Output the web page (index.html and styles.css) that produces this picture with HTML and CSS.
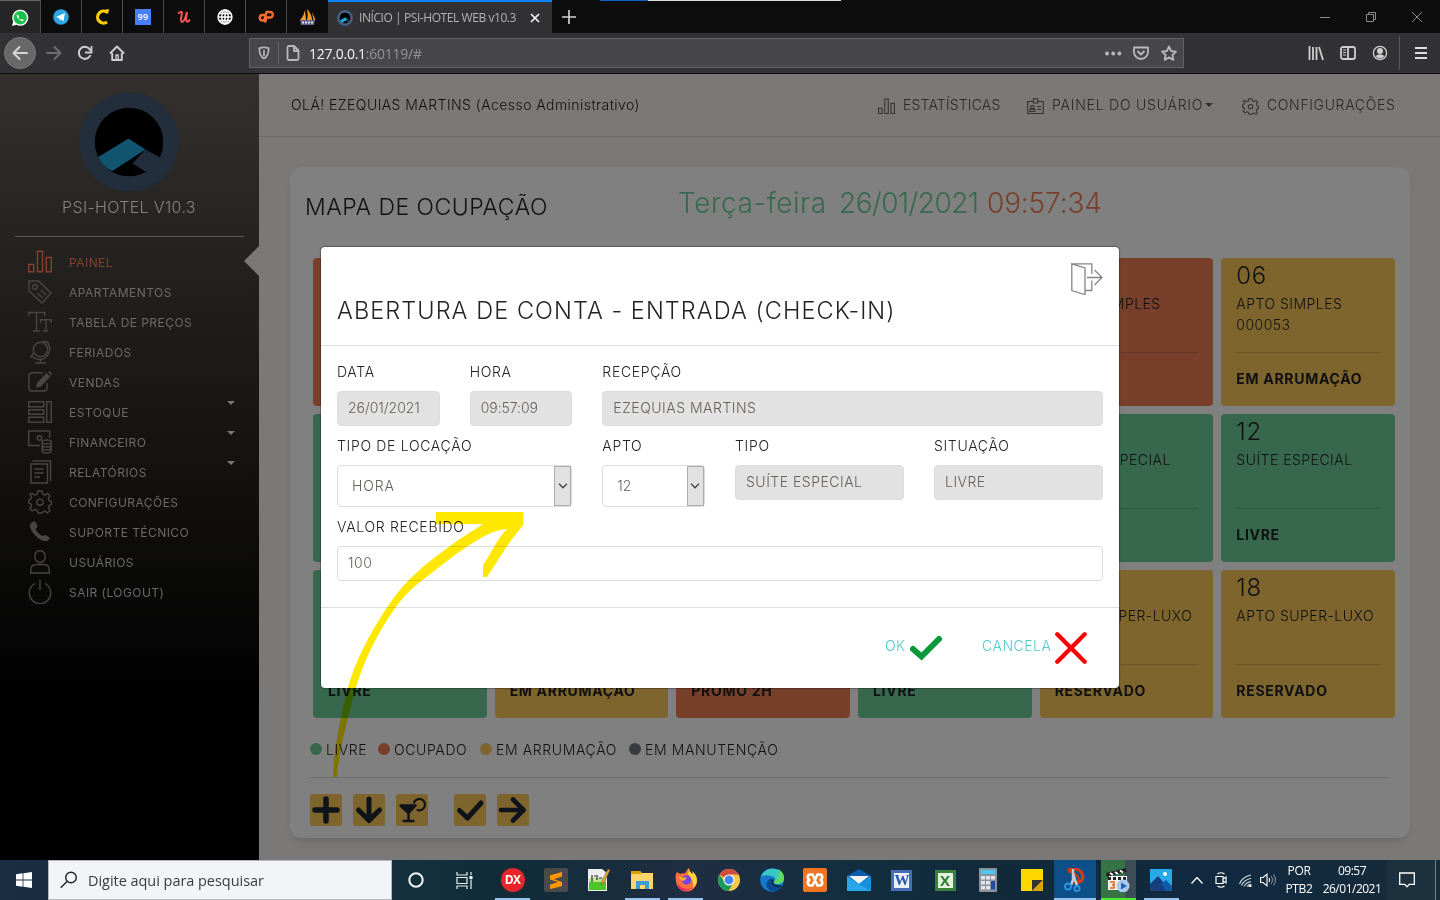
FILE: index.html
```html
<!DOCTYPE html>
<html lang="pt-BR">
<head>
<meta charset="utf-8">
<title>INÍCIO | PSI-HOTEL WEB v10.3</title>
<link rel="stylesheet" href="styles.css">
</head>
<body>
<div class="screen">
  <div class="tabs">
    <div class="pin pin-first"><svg width="18" height="18" viewBox="0 0 18 18"><path d="M1 17l1.200-4.500A8 8 0 1 1 5.500 15.800z" fill="#fff"/><circle cx="9.200" cy="8.800" r="6.700" fill="#18c04a"/><path d="M6.300 5.200c-1.400 1.500.2 4 2.200 5.600s3.700 1.900 4.300.3l-1.900-1.200-1 .9C8.700 10.300 7.800 9.300 7.400 8.300l.8-.9z" fill="#fff"/></svg></div>
    <div class="pin"><svg width="16" height="16" viewBox="0 0 16 16"><circle cx="8" cy="8" r="7.800" fill="#2ca5e0"/><path d="M3 8l9-4-1.600 8.500L7.600 10 7 12 6 9z" fill="#fff"/></svg></div>
    <div class="pin"><svg width="16" height="18" viewBox="0 0 16 18"><path d="M13.500 4.500A6 6 0 1 0 13 14" fill="none" stroke="#ffcd00" stroke-width="3.200"/><path d="M10 2l5-1-1 5z" fill="#ffcd00"/></svg></div>
    <div class="pin"><span class="fav99">99</span></div>
    <div class="pin"><svg width="14" height="14" viewBox="0 0 14 14"><path d="M1 3.500C3 2 5 1 5 3S3 10 4.500 11.500 8.500 9 10 2C9 8 8.500 11 10 11.500s2-1 3-2" fill="none" stroke="#ec5252" stroke-width="2.100"/></svg></div>
    <div class="pin"><svg width="16" height="16" viewBox="0 0 16 16" fill="none" stroke="#fff" stroke-width="1.500"><circle cx="8" cy="8" r="6.900"/><ellipse cx="8" cy="8" rx="3.200" ry="6.900"/><path d="M8 1v14M1 8h14M2 4.500h12M2 11.500h12"/></svg></div>
    <div class="pin"><svg width="16" height="14" viewBox="0 0 16 14" fill="none" stroke="#ff6c2c" stroke-width="2.300"><path d="M7 5H4.500a2.700 2.700 0 0 0 0 5.500H6L8.600 2H12a2.400 2.400 0 0 1 0 5.500H8.500L7.200 12.500"/></svg></div>
    <div class="pin pin-last"><svg width="16" height="16" viewBox="0 0 16 16"><path d="M0 11C3 8 4 5 5 1l1 10zM7 11c1-3 1-6 0-11 3 3 5 7 5 11zM12 3l3.500 8h-2z" fill="#f89c2a"/><path d="M0 11h15l-1 5H1z" fill="#5f6288"/><path d="M2 13.500h11" stroke="#ddd" stroke-width="2" stroke-dasharray="2 1"/></svg></div>
    <div class="tab">
      <svg width="16" height="16" viewBox="0 0 100 100"><use href="#logo"/><circle cx="50" cy="50" r="42" fill="none" stroke="#456184" stroke-width="15"/><path d="M49.500 46.500L66.500 57.500 33 79.300Q23 74 19.300 65z" fill="#23a5dc"/></svg>
      <span class="tab-title">INÍCIO | PSI-HOTEL WEB v10.3</span>
      <svg width="10" height="10" viewBox="0 0 10 10" stroke="#f3f3f3" stroke-width="1.700"><path d="M1 1l8 8M9 1L1 9"/></svg>
    </div>
    <svg class="plus" width="14" height="14" viewBox="0 0 14 14" stroke="#cfcfcf" stroke-width="1.700"><path d="M7 0v14M0 7h14"/></svg>
    <div class="top-strip"><i></i></div>
    <div class="win">
      <svg width="10" height="10" viewBox="0 0 10 10" stroke="#8d8d8d"><path d="M0 5.500h10"/></svg>
      <svg width="10" height="10" viewBox="0 0 10 10" fill="none" stroke="#8d8d8d"><path d="M.5 2.500h7v7h-7zM2.500 2.500v-2h7v7h-2"/></svg>
      <svg width="10" height="10" viewBox="0 0 10 10" stroke="#8d8d8d"><path d="M0 0l10 10M10 0L0 10"/></svg>
    </div>
  </div>
  <div class="toolbar">
    <div class="back"><svg width="16" height="16" viewBox="0 0 16 16" fill="none" stroke="#d6d6d6" stroke-width="2" stroke-linecap="round" stroke-linejoin="round"><path d="M15 8H2M7.500 2L1.500 8l6 6"/></svg></div>
    <svg class="fwd" width="16" height="16" viewBox="0 0 16 16" fill="none" stroke="#6d6d70" stroke-width="1.900" stroke-linecap="round" stroke-linejoin="round"><path d="M1 8h13M8.500 2l6 6-6 6"/></svg>
    <svg class="reload" width="16" height="16" viewBox="0 0 16 16" fill="none" stroke="#cfcfcf" stroke-width="2"><path d="M13.500 10A6 6 0 1 1 12.500 4L14 6"/><path d="M14.500 1v6.500H8" stroke-width="1.800"/></svg>
    <svg class="home" width="16" height="16" viewBox="0 0 16 16" fill="none" stroke="#cfcfcf" stroke-width="1.900" stroke-linejoin="round"><path d="M1 8.500L8 1.500l7 7M3.200 8v7h9.600V8"/><path d="M7 15v-5h2.200v5" stroke-width="1.400"/></svg>
    <div class="url">
      <svg width="12" height="14" viewBox="0 0 14 16" fill="none" stroke="#b9b9bb" stroke-width="1.900"><path d="M1.500 2.500Q7 .5 12.500 2.500C12.500 9 11 12.500 7 14.500 3 12.500 1.500 9 1.500 2.500z"/><path d="M7 4.500v7"/></svg>
      <i class="url-sep"></i>
      <svg width="14" height="16" viewBox="0 0 14 16" fill="none" stroke="#b9b9bb" stroke-width="1.800" stroke-linejoin="round"><path d="M1.500 2.500q0-1.500 1.500-1.500h5l4.500 4.500v8q0 1.500-1.500 1.500H3q-1.500 0-1.500-1.500zM8 1v5h4.500"/></svg>
      <span class="addr">127.0.0.1<em>:60119/#</em></span>
      <svg class="url-end" width="74" height="16" viewBox="0 0 74 16" fill="none" stroke="#b9b9bb" stroke-width="1.800"><path d="M3 8.500h.1M9.200 8.500h.1M15.300 8.500h.1" stroke-width="3.800" stroke-linecap="round"/><path d="M30 2.500h14v4.500a7 7 0 0 1-14 0zM33.500 6l3.500 3.500L40.500 6" stroke-linejoin="round"/><path d="M65 1.500l2.100 4.500 4.900.6-3.600 3.400 1 4.900-4.400-2.500-4.400 2.500 1-4.900-3.600-3.400 4.900-.6z" stroke-linejoin="round"/></svg>
    </div>
    <div class="tools">
      <svg width="16" height="16" viewBox="0 0 16 16" stroke="#cfcfcf" stroke-width="1.800"><path d="M1.500 1v14M5 2v13M8.500 2v13M11 2l4 13"/></svg>
      <svg width="16" height="16" viewBox="0 0 16 16" fill="none" stroke="#cfcfcf" stroke-width="1.800"><rect x="1" y="2" width="14" height="12" rx="2"/><path d="M8 2v12"/><path d="M3 5h3M3 7.500h3M3 10h3" stroke-width="1"/></svg>
      <svg width="16" height="16" viewBox="0 0 16 16"><circle cx="8" cy="8" r="6.600" fill="none" stroke="#cfcfcf" stroke-width="1.300"/><circle cx="8" cy="6" r="3" fill="#cfcfcf"/><path d="M3.500 11q4.500-3.500 9 0-1.800 2.500-4.500 2.500T3.500 11" fill="#cfcfcf"/></svg>
      <i></i>
      <svg width="12" height="12" viewBox="0 0 12 12" stroke="#dedede" stroke-width="1.900"><path d="M0 1h12M0 6h12M0 11h12"/></svg>
    </div>
  </div>

  <div class="page">
    <aside class="side">
      <svg class="logo" width="100" height="100" viewBox="0 0 100 100"><g id="logo"><circle cx="50" cy="50" r="49.500" fill="#232e3d"/><circle cx="50" cy="50" r="34.300" fill="#000"/><path d="M49.500 46.500L66.500 57.500 33 79.300Q23 74 19.300 65z" fill="#10546f"/><path d="M66.500 57.500L53.500 71.500 67 79.800 76 86 88 69z" fill="#232e3d"/></g></svg>
      <div class="brand">PSI-HOTEL V10.3</div>
      <div class="side-hr"></div>
      <nav class="menu">
        <div class="item on"><svg viewBox="0 0 24 24"><path d="M.7 14.500h5v7.300h-5zM9.500 1.300h5v20.500h-5zM18.300 7.500h5v14.300h-5z"/></svg><span>PAINEL</span></div>
        <div class="item"><svg viewBox="0 0 24 24"><path d="M1 1h9.500L23 13l-9 10L1 11z"/><circle cx="7" cy="7" r="2.300"/><path d="M13 10l5 5M9.500 13l5 5"/></svg><span>APARTAMENTOS</span></div>
        <div class="item"><svg viewBox="0 0 24 24"><path d="M.7 6V2.500h16V6M8.500 3v18M5 21h7M12.500 13V9.800h10.800V13M18 10v11M15 21h5"/></svg><span>TABELA DE PREÇOS</span></div>
        <div class="item"><svg viewBox="0 0 24 24"><circle cx="12.500" cy="9.500" r="7.200"/><path d="M17.500 1C26 8 20 20 11 19.500Q6.500 19 3 15.500M15 1l6 2M2.500 18l3-5M12.500 19.500V23M7 23h11"/></svg><span>FERIADOS</span></div>
        <div class="item"><svg viewBox="0 0 24 24"><path d="M15 2.700H4Q1 2.700 1 6v12q0 3 3 3h12q3 0 3-3v-5"/><path class="solid" d="M9 13L18.500 3l3.800 3.500L13 16.500 8 18zM20 2l1.500-1L24 4l-1 1.500z"/></svg><span>VENDAS</span></div>
        <div class="item"><svg viewBox="0 0 24 24"><path d="M.7 1.700h15v5h-15zM.7 9.700h15v4.500h-15zM.7 17.300h15v5h-15zM18.700 1.700h4.600v20.600h-4.600z"/></svg><span>ESTOQUE</span><b></b></div>
        <div class="item"><svg viewBox="0 0 24 24"><path d="M12 15.500H.7V1h21v7"/><circle cx="11.500" cy="8" r="2.200"/><ellipse cx="18.700" cy="12" rx="4.500" ry="2"/><path d="M14.200 12v9q0 2 4.500 2t4.500-2v-9M14.200 15q0 2 4.500 2t4.500-2M14.200 18q0 2 4.500 2t4.500-2"/></svg><span>FINANCEIRO</span><b></b></div>
        <div class="item"><svg viewBox="0 0 24 24"><path d="M3 4h16.500v19H3zM4.500 1h18v20M6.500 9h9M6.500 13h9M6.500 17H12"/></svg><span>RELATÓRIOS</span><b></b></div>
        <div class="item"><svg viewBox="0 0 24 24"><use href="#gear"/></svg><span>CONFIGURAÇÕES</span></div>
        <div class="item"><svg viewBox="0 0 24 24"><path class="solid" d="M3 3Q5 1 7 1.500q2 2 2.300 5Q9 8 7.500 9q2.500 5 7 7 2-1.500 3-1l4 2.500q.5 1-1.500 3-2.500 1.500-6 0Q4 15 2 6.500 2 4 3 3z"/></svg><span>SUPORTE TÉCNICO</span></div>
        <div class="item"><svg viewBox="0 0 24 24"><ellipse cx="12" cy="6.500" rx="5.200" ry="6"/><path d="M2.700 23v-3q0-5.500 6-5.500h6.600q6 0 6 5.500v3z"/></svg><span>USUÁRIOS</span></div>
        <div class="item"><svg viewBox="0 0 24 24"><path d="M7 3.500a10.700 10.700 0 1 0 10 0M12 0v10"/></svg><span>SAIR (LOGOUT)</span></div>
      </nav>
      <div class="notch"></div>
    </aside>

    <main class="main">
      <header class="head">
        <span class="hello">OLÁ! EZEQUIAS MARTINS (Acesso Administrativo)</span>
        <div class="nav nav-a"><svg width="17" height="17" viewBox="0 0 24 24"><path d="M.7 14.500h5v7.300h-5zM9.500 1.300h5v20.500h-5zM18.300 7.500h5v14.300h-5z"/></svg><span>ESTATÍSTICAS</span></div>
        <div class="nav nav-b"><svg width="17" height="17" viewBox="0 0 24 24"><path d="M9 5H1v17h22V5h-8M9 1h6v6H9zM14 12h6M14 16h6M4 19v-3h7v3zM5.500 11h4v4h-4z"/></svg><span>PAINEL DO USUÁRIO</span><b></b></div>
        <div class="nav nav-c"><svg width="17" height="17" viewBox="0 0 24 24"><g id="gear"><path d="M10 1h4l.8 3.200 2 .9 2.800-1.700 2.400 2.400-1.700 2.800.9 2.200 2.300.7v3.200l-2.300.7-.9 2.200 1.700 2.800-2.400 2.400-2.800-1.700-2 .9L14 23h-4l-.8-2.800-2.200-.9-2.800 1.700-2.400-2.400 1.700-2.800-.9-2.200-1.800-.5v-3.200l1.800-.6.9-2.200-1.700-2.800L4.200 3.400 7 5.100l2.200-.9z" stroke-linejoin="round"/><circle cx="12" cy="12.200" r="3.100"/></g></svg><span>CONFIGURAÇÕES</span></div>
      </header>
      <section class="card">
        <div class="card-head"><h1>MAPA DE OCUPAÇÃO</h1><div class="now"><span class="day">Terça-feira</span><span class="num">26/01/2021</span><em>09:57:34</em></div></div>
        <div class="rooms">
          <div class="room busy"></div><div class="room clean"></div><div class="room busy"></div><div class="room free"></div>
          <div class="room busy"><h2>05</h2><p>APTO SIMPLES</p><hr></div>
          <div class="room clean"><h2>06</h2><p>APTO SIMPLES<br>000053</p><hr><strong>EM ARRUMAÇÃO</strong></div>
          <div class="room free"></div><div class="room free"></div><div class="room free"></div><div class="room free"></div>
          <div class="room free"><h2>11</h2><p>SUÍTE ESPECIAL</p><hr></div>
          <div class="room free"><h2>12</h2><p>SUÍTE ESPECIAL</p><hr><strong>LIVRE</strong></div>
          <div class="room free"><h2></h2><p></p><hr><strong>LIVRE</strong></div>
          <div class="room clean"><h2></h2><p></p><hr><strong>EM ARRUMAÇÃO</strong></div>
          <div class="room busy"><h2></h2><p></p><hr><strong>PROMO 2H</strong></div>
          <div class="room free"><h2></h2><p></p><hr><strong>LIVRE</strong></div>
          <div class="room clean"><h2>17</h2><p>APTO SUPER-LUXO</p><hr><strong>RESERVADO</strong></div>
          <div class="room clean"><h2>18</h2><p>APTO SUPER-LUXO</p><hr><strong>RESERVADO</strong></div>
        </div>
        <div class="legend"><span class="l1"><i class="free"></i>LIVRE</span><span class="l2"><i class="busy"></i>OCUPADO</span><span class="l3"><i class="clean"></i>EM ARRUMAÇÃO</span><span><i class="maint"></i>EM MANUTENÇÃO</span></div>
        <div class="actions">
          <svg viewBox="0 0 32 32"><path d="M16 5v22M5 16h22" stroke-width="5.500"/></svg>
          <svg viewBox="0 0 32 32"><path d="M16 5v21M5.500 16L16 26.500 26.500 16" stroke-width="5"/></svg>
          <svg viewBox="0 0 32 32"><path d="M4.500 11.500h15L12.500 19zM12.500 17v10M7.500 27h10" stroke-width="2.400"/><path d="M4 11h17l-8.500 9z" fill="#0f141a" stroke="none"/><path d="M18 8.500a5.700 5.700 0 1 1 3.500 7.500" stroke-width="2.200"/></svg>
          <svg class="gap" viewBox="0 0 32 32"><path d="M5.500 16.500l8 7.500L27 9" stroke-width="5"/></svg>
          <svg viewBox="0 0 32 32"><path d="M4 16h21M16 5.500L26.500 16 16 26.500" stroke-width="4.600"/></svg>
        </div>
      </section>
    </main>

    <div class="modal">
      <div class="m-head">
        <svg class="exit" width="32" height="32" viewBox="0 0 32 32" fill="none" stroke="#858585" stroke-width="1.300"><path d="M.8.800L14 5v26.500L.8 27.500zM.8.800h20V11M20.800 17.500v10h-7M16 14.500h15M23.500 7l7.500 7.500-7.500 7.500"/></svg>
        <h3>ABERTURA DE CONTA - ENTRADA (CHECK-IN)</h3>
      </div>
      <div class="m-body">
        <div class="f s2"><label>DATA</label><div class="in ro num-in">26/01/2021</div></div>
        <div class="f s2"><label>HORA</label><div class="in ro num-in">09:57:09</div></div>
        <div class="f s8"><label>RECEPÇÃO</label><div class="in ro">EZEQUIAS MARTINS</div></div>
        <div class="f s4"><label>TIPO DE LOCAÇÃO</label><div class="sel"><span>HORA</span><i><svg width="10" height="6" viewBox="0 0 10 6"><path d="M1 .8l4 4 4-4"/></svg></i></div></div>
        <div class="f s2"><label>APTO</label><div class="sel num-in"><span>12</span><i><svg width="10" height="6" viewBox="0 0 10 6"><path d="M1 .8l4 4 4-4"/></svg></i></div></div>
        <div class="f s3"><label>TIPO</label><div class="in ro">SUÍTE ESPECIAL</div></div>
        <div class="f s3"><label>SITUAÇÃO</label><div class="in ro">LIVRE</div></div>
        <div class="f s12"><label>VALOR RECEBIDO</label><div class="in">100</div></div>
      </div>
      <div class="m-foot">
        <span class="btn ok">OK</span><svg width="32" height="32" viewBox="0 0 32 32" fill="none" stroke="#09993a" stroke-width="6" stroke-linecap="round"><path d="M3 17l8.500 7.500L29 7"/></svg>
        <span class="btn cancel">CANCELA</span><svg width="32" height="32" viewBox="0 0 32 32" fill="none" stroke="#fb0007" stroke-width="4.300" stroke-linecap="round"><path d="M2.300 2.300l27.400 27.400M29.700 2.300L2.300 29.700"/></svg>
      </div>
    </div>
    <svg class="arrow" width="200" height="270" viewBox="330 510 200 270"><path d="M333 777C333 760 338 727 347 691 355 660 370 633 390 603 406 580 424 565 446 549 459 539 471 532 483 524L436 524V512H523.500V525C513 537 504 550 498 560 493 568 489 574 487 577H483V565C490 556 496 540 507 529 492 530 481 538 465 548 450 558 436 570 420 582 404 594 394 609 384 625 371 646 362 668 355 690 348 718 339 750 337 777z" fill="#ffe800"/></svg>
  </div>

  <footer class="task">
    <div class="start"><svg width="16" height="16" viewBox="0 0 16 16" fill="#fff"><path d="M0 2.200l6.600-.9v6.300H0zM7.400 1.200L16 0v7.600H7.400zM0 8.400h6.600v6.300L0 13.800zM7.400 8.400H16V16l-8.600-1.200z"/></svg></div>
    <div class="search"><svg width="18" height="18" viewBox="0 0 18 18" fill="none" stroke="#222" stroke-width="1.400"><circle cx="11" cy="6.500" r="5.300"/><path d="M7.200 10.300L.8 16.800"/></svg><span>Digite aqui para pesquisar</span></div>
    <div class="sys"><svg width="18" height="18" viewBox="0 0 18 18" fill="none" stroke="#f3f3f3" stroke-width="2"><circle cx="9" cy="9" r="6.700"/></svg></div>
    <div class="sys"><svg width="17" height="17" viewBox="0 0 17 17" fill="none" stroke="#eee" stroke-width="1.200"><path d="M1 0v3h10V0M1 17v-3h10v3M1 5.500h10v6H1zM15 0v3M15 7.500V17"/><path d="M13.500 4h3v3h-3z" fill="#fff" stroke="none"/></svg></div>
    <div class="apps">
      <div class="app run"><span class="dx">DX</span></div>
      <div class="app"><svg viewBox="0 0 24 24"><rect width="24" height="24" rx="2" fill="#4a4a4a"/><path d="M18 4v4.500l-8 2.700 8 2.700v4.300L6 21v-4.200l8-2.800-8-2.500V7.200z" fill="#ff9800"/></svg></div>
      <div class="app"><svg viewBox="0 0 24 24"><path d="M1 1h14l5 4v18H1z" fill="#eee"/><path d="M2 14h17v8H2z" fill="#4cc529"/><path d="M2 10h17v4H2z" fill="#b7e68b"/><path d="M5 7v7M7 8h2M10 7v5M12 10h3" stroke="#333" stroke-width="1.200"/><path d="M14 17l1-4 6-12 2 1-6 13z" fill="#e3a72c" stroke="#744" stroke-width=".5"/></svg></div>
      <div class="app run"><svg viewBox="0 0 24 24"><path d="M1 3h9l2 2h11v16H1z" fill="#ffd56b"/><path d="M1 3h9l2 3H1z" fill="#dba000"/><path d="M6 21v-8h13v8h-4v-4h-5v4z" fill="#3e9bdc"/></svg></div>
      <div class="app run"><svg viewBox="0 0 24 24"><path d="M2 6l1-2 3 2q3-1 5-.5Q12 2 15 0q0 4 4 6 0-1-1-3 5 4 5 10a10.500 10.500 0 0 1-21 0q-1-4 0-7z" fill="#ff7139"/><path d="M15 0q0 4 4 6 0-1-1-3 5 4 5 10-1 5-4 7 1-8-5-14z" fill="#ffd43c"/><path d="M4 16q5 7 14 4-5 4-10 2t-4-6" fill="#f22470"/><circle cx="12.500" cy="12" r="4.700" fill="#7542e5"/><path d="M4 8q5 3 9 1-1 3-4 4-3-1-5-5" fill="#ffad2d"/></svg></div>
      <div class="app"><svg viewBox="0 0 24 24"><circle cx="12" cy="12" r="11" fill="#fbc84a"/><path d="M12 12L2.500 6.500A11 11 0 0 1 21.500 6.500H12z" fill="#d14b3e"/><path d="M2.500 6.500A11 11 0 0 0 11.500 23l5-8.500H8z" fill="#189b5a"/><circle cx="12" cy="12" r="5.500" fill="#fff"/><circle cx="12" cy="12" r="4.400" fill="#4285f4"/></svg></div>
      <div class="app"><svg viewBox="0 0 24 24"><circle cx="12" cy="12" r="11.800" fill="#1477c9"/><path d="M1 9C4-2 23-2 24 10q0 6-7 6-3 0-3-2 3-5-3-6Q5 6 1 9" fill="#38c9c4"/><path d="M18 1q6 3 6 9 0 6-7 6-3 0-3-2 7-6 4-13" fill="#5cda65"/><path d="M14 12q-3 7 8 6.500-5 6-12 4-6-4-2-10 2-3 6-.5" fill="#0c4a93"/><path d="M14 10.500q-2 3 0 5.500 3 2 7.500 1l-.5 2q-9 1-10-6z" fill="#122b3a"/></svg></div>
      <div class="app"><svg viewBox="0 0 24 24"><rect width="24" height="24" rx="2" fill="#f27622"/><path d="M7.500 6.500h2l5 11h2a2.700 2.700 0 0 0 0-5.500 2.700 2.700 0 0 0 0-5.500h-2l-5 11h-2a2.700 2.700 0 0 1 0-5.500 2.700 2.700 0 0 1 0-5.500z" fill="none" stroke="#fff" stroke-width="2.600"/></svg></div>
      <div class="app"><svg viewBox="0 0 24 24"><path d="M0 8L12 1l12 7v14H0z" fill="#0b5cab"/><path d="M2 8h20l-10 8z" fill="#f2f2f2"/><path d="M0 8l12 8L24 8v15H0z" fill="#28a8ea"/><path d="M12 16L24 8v15z" fill="#1490df"/></svg></div>
      <div class="app"><span class="office word">W</span></div>
      <div class="app"><span class="office excel">X</span></div>
      <div class="app"><svg viewBox="0 0 24 24"><rect x="3" width="18" height="24" rx="1" fill="#8c929a"/><path d="M5 2h14v4H5z" fill="#4cc8f4"/><path d="M5 8h4v3.500H5zM10 8h4v3.500h-4zM15 8h4v3.500h-4zM5 13h4v3.500H5zM10 13h4v3.500h-4zM5 18h4v3.500H5zM10 18h4v3.500h-4z" fill="#e1e4e8"/><path d="M15 13h4v8.500h-4z" fill="#1d50a0"/></svg></div>
      <div class="app"><svg viewBox="0 0 24 24"><path d="M1 1h22v22H1z" fill="#ffd900"/><path d="M12 23V12h11z" fill="#333"/><path d="M12 23h11V12z" fill="#d9a300"/></svg></div>
      <div class="app run snip"><svg viewBox="0 0 24 24"><path d="M5 2Q18-2 20 9q-1 7-9 5" fill="none" stroke="#d83b12" stroke-width="3"/><path d="M5 3.500Q16 5 16 13" fill="none" stroke="#d83b12" stroke-width="2"/><path d="M10 1v11l-2 5M10 5l4 13" stroke="#c5ccd4" stroke-width="2.500" fill="none"/><circle cx="5" cy="18.500" r="3" fill="none" stroke="#2793dc" stroke-width="2"/><circle cx="14" cy="20.500" r="2.500" fill="none" stroke="#2793dc" stroke-width="2"/></svg></div>
      <div class="app run clap"><svg viewBox="0 0 24 24"><path d="M2 10h19v12H2z" fill="#f1f1f1"/><path d="M0 5l20-5 .5 4L1 9z" fill="#222"/><path d="M4 5l3 2M9 4l3 2M14 2.500l3 2M3 9h18" stroke="#fff" stroke-width="2"/><path d="M2 10.500h19" stroke="#222" stroke-width="3" stroke-dasharray="3 2"/><path d="M4 14h4v3H6h2v3H4" fill="none" stroke="#e0661d" stroke-width="1.600"/><circle cx="17" cy="18" r="6.500" fill="#a9c9ee"/><path d="M15 14.500l6 3.500-6 3.500z" fill="#1d62b8"/></svg></div>
      <div class="app run"><svg viewBox="0 0 24 24"><path d="M1 1h22v22H1z" fill="#2aa9ea"/><path d="M1 16l8-8 13 15H1z" fill="#173e7d"/><path d="M12 16l5-4 6 6v5H17z" fill="#0c5ca9"/><circle cx="16" cy="6" r="2" fill="#fff"/></svg></div>
    </div>
    <div class="tray">
      <svg width="12" height="7" viewBox="0 0 12 7" fill="none" stroke="#fff" stroke-width="1.300"><path d="M.5 6.500l5.500-6 5.500 6"/></svg>
      <svg width="12" height="16" viewBox="0 0 12 16" fill="none" stroke="#fff" stroke-width="1.200"><path d="M1 4.500h7v7H1zM8 7l3-2v6L8 9M2.500 2Q6-.5 9.500 2M2.500 14q3.500 2.500 7 0"/></svg>
      <svg width="13" height="13" viewBox="0 0 13 13" fill="none" stroke="#d5dade" stroke-width="1.100"><path d="M.5 10Q3 3 12 1M2.500 11.500Q5 6 12 4.300M5 12.500q2-4 7-5M8 12.500Q9 11 12 10"/><path d="M10 11h2v2h-2z" fill="#fff"/></svg>
      <svg width="16" height="14" viewBox="0 0 16 14" fill="none" stroke="#fff" stroke-width="1.100"><path d="M.6 4.500h2.500L7 1.200v11.600L3.100 9.500H.6zM9 5q1.300 2 0 4"/><path d="M11 3q3 4 0 8M13.500 1.500q4 5.500 0 11" stroke="#7d8a94"/></svg>
      <div class="lang"><span>POR</span><span class="ptb">PTB2</span></div>
      <div class="clock"><span>09:57</span><span class="date">26/01/2021</span></div>
      <div class="note"><svg width="16" height="16" viewBox="0 0 16 16" fill="none" stroke="#fff" stroke-width="1.300"><path d="M.7 1h14.600v11.300h-5L8 14.700l-2.300-2.400h-5z"/></svg></div>
    </div>
  </footer>
</div>
</body>
</html>
```
FILE: styles.css
```css
* { box-sizing: border-box; }
body { margin: 0; background: #000; }
svg { display: block; flex: none; }
h1, h2, h3, p { margin: 0; font-weight: 300; }
em { font-style: normal; }
.screen { width: 1440px; height: 900px; display: flex; flex-direction: column; overflow: hidden; font: 300 14px/21px Inter, sans-serif; white-space: nowrap; }

/* browser tabs */
.tabs { height: 33px; background: #0c0c0d; display: flex; align-items: center; font-family: "Open Sans", sans-serif; }
.pin { flex: 0 0 41px; height: 33px; border-right: 1px solid #4b4b4b; display: flex; align-items: center; justify-content: center; padding-top: 1px; }
.pin-first { background: #252526; border-top: 1px solid #666; }
.pin-last { border-right: 0; }
.fav99 { width: 16px; height: 16px; background: #4480ff; color: #fff; font: 600 9px/16px "Open Sans", sans-serif; text-align: center; }
.tab { width: 224px; height: 33px; background: #323234; border-top: 2px solid #0a84ff; display: flex; align-items: center; padding: 0 12px 0 9px; }
.tab-title { font-size: 12px; font-weight: 400; color: #b3b3b4; letter-spacing: -.43px; margin-left: 6px; width: 171px; }
.plus { margin-left: 10px; }
.top-strip { align-self: flex-start; width: 241px; height: 1px; margin-left: 24px; background: #ddd; display: flex; }
.top-strip i { width: 48px; background: #0a63c4; }
.win { margin-left: auto; display: flex; gap: 36px; padding-right: 18px; }
.toolbar { height: 41px; background: #323234; border-bottom: 1px solid #0c0c0d; display: flex; align-items: center; padding-left: 4px; flex: none; }
.back { width: 32px; height: 32px; border-radius: 50%; background: #686868; border: 1px solid #7a7a7a; display: flex; align-items: center; justify-content: center; }
.fwd { margin-left: 10px; }
.reload { margin-left: 15px; }
.home { margin-left: 16px; }
.url { margin-left: 124px; width: 935px; height: 30px; background: #474749; border: 1px solid #616163; display: flex; align-items: center; padding: 0 5px 0 8px; }
.url-sep { width: 1px; height: 22px; background: #646466; margin: 0 7px 0 8px; }
.addr { font: 400 14px/20px "Open Sans", sans-serif; color: #f5f5f5; letter-spacing: -.25px; margin: 2px 0 0 9px; }
.addr em { color: #949496; }
.url-end { margin-left: auto; }
.tools { margin-left: 124px; display: flex; align-items: center; gap: 16px; }
.tools i { width: 1px; height: 34px; background: #5b5b5d; margin: 0 -1px 0 -5px; }

/* application shell */
.page { height: 786px; flex: none; display: flex; position: relative; background: #7a7977; color: #101112; }
.side { width: 259px; height: 786px; background: linear-gradient(#33302d, #000 80%); position: relative; display: flex; flex-direction: column; }
.logo { margin: 18px 0 0 79px; }
.brand { width: 258px; text-align: center; font-size: 16px; line-height: 30px; color: #858483; letter-spacing: .35px; }
.side-hr { height: 1px; margin: 14px 15px 10px; background: #5b5958; }
.menu { display: flex; flex-direction: column; }
.item { height: 30px; display: flex; align-items: center; padding-left: 28px; color: #6b6a69; font-size: 12px; font-weight: 400; letter-spacing: .45px; }
.item span { margin-left: 17px; flex: 1; }
.item svg { width: 24px; height: 24px; fill: none; stroke: #474645; stroke-width: 1.400; }
.item .solid { fill: #474645; stroke: none; }
.item b { border: 4px solid transparent; border-top-color: #777; border-bottom: 0; margin: -18px 24px 0 0; }
.on { color: #84402a; }
.item.on svg { stroke: #84402a; }
.notch { position: absolute; right: 0; top: 172px; border: 15px solid transparent; border-left: 0; border-right-color: #7a7977; }
.main { flex: 1; display: flex; flex-direction: column; }
.head { height: 63px; border-bottom: 1px solid #6d6c6a; display: flex; align-items: center; padding: 0 0 1px 32px; }
.hello { width: 587px; letter-spacing: .45px; }
.nav { display: flex; align-items: center; color: #2b2a28; }
.nav svg { fill: none; stroke: #333230; stroke-width: 1.500; margin: 3px 8px 0 0; }
.nav b { border: 4px solid transparent; border-top-color: #333230; border-bottom: 0; margin-left: 2px; }
.nav-a { width: 149px; letter-spacing: .17px; }
.nav-b { width: 215px; letter-spacing: .77px; }
.nav-c { letter-spacing: .65px; }
.card { margin: 30px 30px 0 31px; height: 671px; background: #808080; border-radius: 12px; box-shadow: 0 6px 10px -4px rgba(0,0,0,.15); padding-right: 15px; }
.card-head { height: 91px; display: flex; padding-left: 15px; }
.card-head h1 { width: 373px; font-size: 23px; line-height: 80px; letter-spacing: .5px; }
.now { font-size: 28px; line-height: 73px; font-weight: 300; color: #36694d; display: flex; }
.day { letter-spacing: .55px; width: 161px; }
.num { letter-spacing: -.5px; width: 148px; }
.now em { color: #78402b; letter-spacing: -.15px; }
.rooms { margin-left: 23px; display: grid; grid-template-columns: repeat(6, 1fr); grid-auto-rows: 148px; gap: 8px; }
.room { border-radius: 4px; padding: 0 15px; overflow: hidden; letter-spacing: .48px; }
.free { background: #37684e; }
.busy { background: #78402b; }
.clean { background: #7e642d; }
.maint { background: #383b40; }
.room h2 { font-size: 24px; line-height: 36px; height: 35px; letter-spacing: .7px; }
.room p { height: 42px; }
.room hr { border: 0; height: 1px; background: rgba(0,0,0,.15); margin: 17px 0 15px; }
.room strong { font-weight: 700; font-size: 14px; letter-spacing: .7px; }
.legend { margin: 17px 0 0 20px; height: 28px; display: flex; align-items: center; letter-spacing: .62px; }
.legend span { display: flex; align-items: center; }
.legend i { width: 12px; height: 12px; border-radius: 50%; margin-right: 4px; }
.l1 { width: 68px; }
.l2 { width: 102px; }
.l3 { width: 149px; }
.actions { margin: 14px 5px 0 20px; border-top: 1px solid #6e6e6e; padding-top: 16px; display: flex; gap: 11px; }
.actions svg { width: 32px; height: 32px; border-radius: 3px; background: #7e642d; fill: none; stroke: #0f141a; stroke-linecap: round; stroke-linejoin: round; }
.actions .gap { margin-left: 15px; }

/* check-in dialog */
.modal { position: absolute; left: 321px; top: 173px; width: 798px; height: 441px; background: #fff; border-radius: 4px; box-shadow: 0 0 1px 1px rgba(0,0,0,.28); color: #252422; }
.m-head { height: 99px; border-bottom: 1px solid #dedede; padding: 16px; }
.exit { margin-left: auto; }
.m-head h3 { font-size: 23.500px; line-height: 32px; letter-spacing: 1.070px; }
.m-body { height: 261px; padding: 15px 16px 0; display: grid; grid-template-columns: repeat(12, 1fr); column-gap: 30px; grid-template-rows: 74px 81px 74px; }
.f label { display: block; height: 21px; margin-bottom: 9px; letter-spacing: .68px; }
.s2 { grid-column: span 2; }
.s3 { grid-column: span 3; }
.s4 { grid-column: span 4; }
.s8 { grid-column: span 8; }
.s12 { grid-column: span 12; }
.in { height: 35px; border: 1px solid #dcdcdc; border-radius: 4px; padding: 0 10px; line-height: 32px; color: #66615b; letter-spacing: .5px; }
.ro { background: #e2e2e2; }
.sel { height: 42px; border: 1px solid #dcdcdc; border-radius: 4px; padding-left: 14px; line-height: 40px; color: #66615b; display: flex; justify-content: space-between; letter-spacing: .9px; }
.in.num-in, .sel.num-in { letter-spacing: -.05px; }
.sel i { width: 17px; background: #e1e1e1; border: 1px solid #adadad; display: flex; align-items: center; justify-content: center; }
.sel svg { fill: none; stroke: #444; stroke-width: 1.300; }
.m-foot { height: 81px; border-top: 1px solid #dedede; display: flex; align-items: center; padding-right: 32px; justify-content: flex-end; }
.btn { color: #51cbce; padding-bottom: 6px; letter-spacing: .5px; }
.ok { width: 25px; }
.cancel { width: 73px; margin-left: 40px; }
.arrow { position: absolute; left: 330px; top: 436px; mix-blend-mode: multiply; }

/* taskbar */
.task { height: 40px; flex: none; background: linear-gradient(90deg, #1a2d43 0, #142f3d 392px, #102c38 520px, #202e43 690px, #122e3e 850px, #10293b 1060px, #112a40 1240px, #172b39); display: flex; align-items: center; color: #fff; font-family: "Open Sans", sans-serif; font-weight: 400; }
.start { width: 48px; display: flex; justify-content: center; }
.search { width: 344px; height: 40px; background: #f3f4f7; border: 1px solid #b5b7ba; display: flex; align-items: center; padding-left: 11px; color: #3b3b3b; font-size: 14.500px; }
.search span { margin-left: 10px; letter-spacing: -.04px; }
.sys { width: 48px; display: flex; justify-content: center; }
.apps { width: 695px; padding-left: 3px; height: 40px; display: grid; grid-template-columns: repeat(16, 1fr); }
.app { display: flex; align-items: center; justify-content: center; }
.app svg { width: 24px; height: 24px; }
.run { border-bottom: 2px solid #97c4ef; margin: 0 4px; padding-top: 2px; }
.snip { background: #0d5089; margin: 0 1px; }
.clap { background: linear-gradient(90deg, #367447 70%, #3d4d58 0); border-color: #4aed30; }
.dx { width: 24px; height: 24px; border-radius: 50%; background: #e5252a; font: 700 12px/24px "Open Sans", sans-serif; text-align: center; letter-spacing: -.5px; }
.office { width: 21px; height: 21px; border: 3px solid #496eb7; background: #e8f0fa; color: #2853a8; font: 700 15px/15px "Liberation Serif", serif; text-align: center; }
.excel { border-color: #3b803b; color: #28812e; background: #e5f2df; font-family: "Open Sans", sans-serif; }
.tray { flex: 1; display: flex; align-items: center; padding-left: 8px; height: 40px; font-size: 12px; line-height: 18px; }
.tray > svg + svg { margin-left: 12px; }
.tray > svg:nth-child(4) { margin-left: 8px; }
.lang, .clock { display: flex; flex-direction: column; align-items: center; letter-spacing: -.35px; }
.lang { width: 36px; margin-left: 5px; }
.clock { width: 70px; letter-spacing: -.5px; }
.note { width: 49px; height: 40px; background: #1d303d; border-right: 1px solid #788088; display: flex; align-items: center; padding-left: 12px; margin-left: auto; margin-right: 4px; }
```
